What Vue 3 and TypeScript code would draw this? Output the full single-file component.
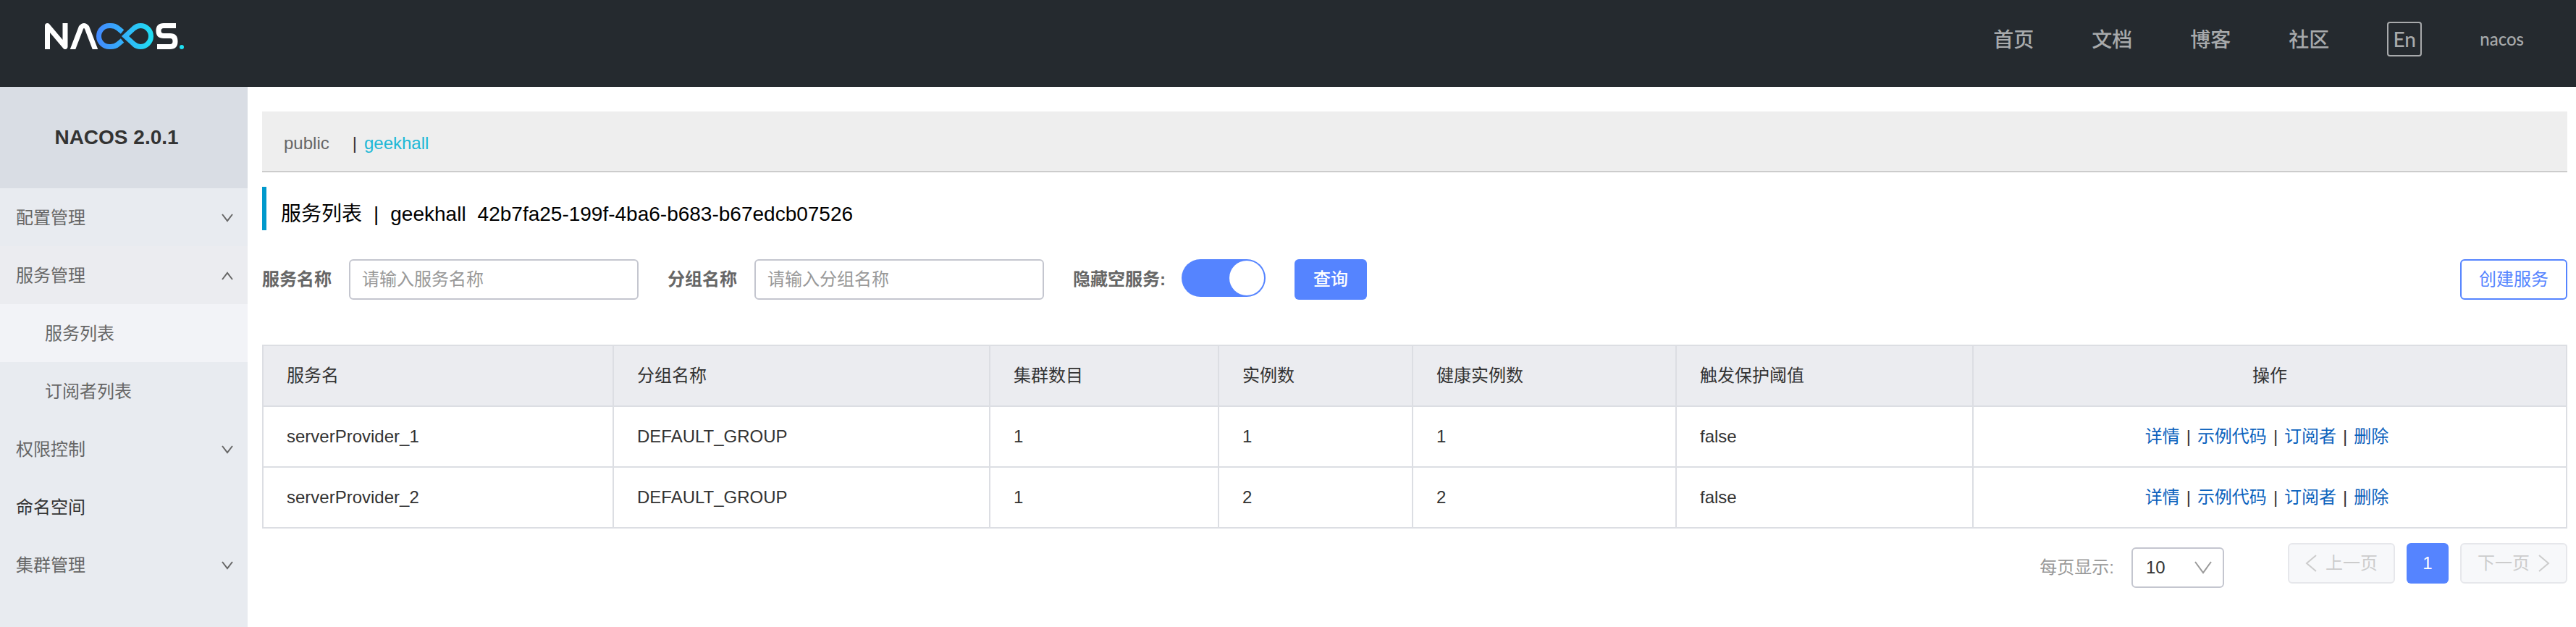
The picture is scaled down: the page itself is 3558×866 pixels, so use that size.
<script setup lang="ts">
import { ref } from 'vue'

interface MenuItem {
  label: string
  state: 'closed' | 'open' | 'plain'
  children?: { label: string; active: boolean }[]
}

const navLinks = ['首页', '文档', '博客', '社区']

const menu: MenuItem[] = [
  { label: '配置管理', state: 'closed' },
  {
    label: '服务管理',
    state: 'open',
    children: [
      { label: '服务列表', active: true },
      { label: '订阅者列表', active: false },
    ],
  },
  { label: '权限控制', state: 'closed' },
  { label: '命名空间', state: 'plain' },
  { label: '集群管理', state: 'closed' },
]

const columns = ['服务名', '分组名称', '集群数目', '实例数', '健康实例数', '触发保护阈值']

const services = [
  { name: 'serverProvider_1', group: 'DEFAULT_GROUP', clusters: 1, instances: 1, healthy: 1, threshold: 'false' },
  { name: 'serverProvider_2', group: 'DEFAULT_GROUP', clusters: 1, instances: 2, healthy: 2, threshold: 'false' },
]

const actions = ['详情', '示例代码', '订阅者', '删除']

const serviceName = ref('')
const groupName = ref('')
const hideEmpty = ref(true)
const pageSize = ref('10')
</script>

<template>
  <div class="page">
    <header class="topbar">
      <a class="logo" href="#" aria-label="Nacos">
        <svg viewBox="0 0 192 36" width="192" height="36" fill="none">
          <defs>
            <linearGradient id="loop" x1="72" y1="0" x2="151" y2="0" gradientUnits="userSpaceOnUse">
              <stop offset="0" stop-color="#4389ff" />
              <stop offset="1" stop-color="#1fe0f2" />
            </linearGradient>
          </defs>
          <path d="M3.5 36V3.5L28 32.500V0" stroke="#fff" stroke-width="7" stroke-linejoin="round" />
          <path d="M37 40L50 6Q54 1 58 6L71 40" stroke="#fff" stroke-width="7" stroke-linejoin="round" />
          <path
            d="M107 12L101 7Q97 3.500 91 3.500H89A14.500 14.500 0 0 0 89 32.500H91Q97 32.500 101 29L107 24M111 18L123 7Q127 3.500 132 3.500A14.500 14.500 0 0 1 132 32.500Q127 32.500 123 29Z"
            stroke="url(#loop)"
            stroke-width="7"
          />
          <path d="M181 3.500H164Q157 3.500 157 10.500T164 17.500H173Q180 17.500 180 25T173 32.500H155" stroke="#fff" stroke-width="7" />
          <circle cx="189" cy="33" r="3" fill="#1fe0f2" />
        </svg>
      </a>
      <nav class="nav">
        <a v-for="link in navLinks" :key="link" href="#">{{ link }}</a>
        <button class="lang" type="button">En</button>
        <a class="user" href="#">nacos</a>
      </nav>
    </header>

    <div class="body">
      <aside class="sidebar">
        <h1>NACOS 2.0.1</h1>
        <ul class="menu">
          <li v-for="item in menu" :key="item.label">
            <a class="item" :class="item.state" href="#">
              <span>{{ item.label }}</span>
              <svg v-if="item.state !== 'plain'" viewBox="0 0 16 12" width="16" height="12">
                <path :d="item.state === 'open' ? 'M1 11L8 2L15 11' : 'M1 1L8 10L15 1'" />
              </svg>
            </a>
            <ul v-if="item.children">
              <li v-for="child in item.children" :key="child.label">
                <a class="item child" :class="{ active: child.active }" href="#">{{ child.label }}</a>
              </li>
            </ul>
          </li>
        </ul>
      </aside>

      <main class="main">
        <div class="namespaces">
          <a href="#">public</a>
          <span class="bar">|</span>
          <a class="current" href="#">geekhall</a>
        </div>

        <h2 class="title">
          <span>服务列表</span><span>|</span><span>geekhall</span><span>42b7fa25-199f-4ba6-b683-b67edcb07526</span>
        </h2>

        <form class="filters" @submit.prevent>
          <div class="field">
            <label for="service-name">服务名称</label>
            <input id="service-name" v-model="serviceName" class="text" type="text" placeholder="请输入服务名称" />
          </div>
          <div class="field">
            <label for="group-name">分组名称</label>
            <input id="group-name" v-model="groupName" class="text" type="text" placeholder="请输入分组名称" />
          </div>
          <div class="field toggle">
            <label for="hide-empty">隐藏空服务:</label>
            <input id="hide-empty" v-model="hideEmpty" class="switch" type="checkbox" role="switch" />
          </div>
          <button class="btn primary" type="submit">查询</button>
          <button class="btn outline" type="button">创建服务</button>
        </form>

        <table class="services">
          <colgroup>
            <col class="c-name" />
            <col class="c-group" />
            <col class="c-clusters" />
            <col class="c-instances" />
            <col class="c-healthy" />
            <col class="c-threshold" />
            <col />
          </colgroup>
          <thead>
            <tr>
              <th v-for="column in columns" :key="column" scope="col">{{ column }}</th>
              <th class="center" scope="col">操作</th>
            </tr>
          </thead>
          <tbody>
            <tr v-for="service in services" :key="service.name">
              <td>{{ service.name }}</td>
              <td>{{ service.group }}</td>
              <td>{{ service.clusters }}</td>
              <td>{{ service.instances }}</td>
              <td>{{ service.healthy }}</td>
              <td>{{ service.threshold }}</td>
              <td class="center">
                <div class="actions">
                  <template v-for="(action, index) in actions" :key="action">
                    <span v-if="index">|</span>
                    <a href="#">{{ action }}</a>
                  </template>
                </div>
              </td>
            </tr>
          </tbody>
        </table>

        <div class="paging">
          <label for="page-size">每页显示:</label>
          <div class="select">
            <select id="page-size" v-model="pageSize">
              <option>10</option>
              <option>20</option>
              <option>30</option>
            </select>
            <svg viewBox="0 0 24 24" width="24" height="24"><path d="M1 4L12 19L23 4" /></svg>
          </div>
          <div class="pages">
            <button class="step" type="button" disabled>
              <svg viewBox="0 0 16 24" width="16" height="24"><path d="M15 1L2 12L15 23" /></svg>
              <span>上一页</span>
            </button>
            <button class="number" type="button">1</button>
            <button class="step" type="button" disabled>
              <span>下一页</span>
              <svg viewBox="0 0 16 24" width="16" height="24"><path d="M1 1L14 12L1 23" /></svg>
            </button>
          </div>
        </div>
      </main>
    </div>
  </div>
</template>

<style>
body {
  margin: 0;
  background: #fff;
}
</style>

<style scoped>
.page {
  display: flex;
  flex-direction: column;
  min-height: 100vh;
  font-family: 'Liberation Sans', 'Noto Sans CJK SC', sans-serif;
  font-size: 24px;
  line-height: 36px;
  color: #333;
}

.page *,
.page *::before {
  box-sizing: border-box;
}

a {
  color: inherit;
  text-decoration: none;
}

button,
input,
select {
  margin: 0;
  font: inherit;
}

svg {
  display: block;
  flex: none;
}

ul {
  margin: 0;
  padding: 0;
  list-style: none;
}

.topbar {
  display: flex;
  justify-content: space-between;
  align-items: flex-start;
  height: 120px;
  padding: 30px 72px 0 62px;
  background: #252a2f;
}

.logo {
  padding-top: 2px;
}

.nav {
  display: flex;
  align-items: center;
  gap: 80px;
  height: 48px;
  font-family: Lato, 'Noto Sans CJK SC', sans-serif;
  font-size: 28px;
  font-weight: 500;
  color: #a8aaac;
}

.lang {
  width: 48px;
  height: 48px;
  padding: 0;
  border: 2px solid #a8aaac;
  border-radius: 4px;
  background: none;
  color: inherit;
  line-height: 40px;
}

.user {
  font-size: 24px;
}

.body {
  display: flex;
  flex: 1;
}

.sidebar {
  flex: none;
  width: 342px;
  background: #e8ebf0;
  color: #666;
}

.sidebar h1 {
  margin: 0;
  padding-right: 20px;
  background: #d9dde4;
  color: #333;
  font-size: 28px;
  line-height: 140px;
  text-align: center;
}

.item {
  display: flex;
  align-items: center;
  justify-content: space-between;
  height: 80px;
  padding: 2px 20px 0 22px;
}

.item svg {
  fill: none;
  stroke: #666;
  stroke-width: 2;
}

.item.open {
  background: #ebecf0;
}

.item.plain {
  color: #333;
}

.item.child {
  padding-left: 62px;
}

.item.active {
  background: #f2f3f7;
}

.main {
  flex: 1;
  min-width: 0;
  padding: 34px 12px 0 20px;
}

.namespaces {
  display: flex;
  align-items: center;
  gap: 10px;
  height: 84px;
  padding: 6px 30px 0;
  border-bottom: 2px solid #ccc;
  background: #eee;
  color: #666;
}

.namespaces .bar {
  margin-left: 22px;
  color: #333;
}

.namespaces .current {
  color: #20b8d6;
}

.title {
  display: flex;
  gap: 16px;
  height: 60px;
  margin: 20px 0 40px;
  padding: 8px 0 0 20px;
  border-left: 6px solid #09c;
  color: #000;
  font-size: 28px;
  font-weight: 400;
  line-height: 60px;
}

.filters {
  display: flex;
  align-items: flex-start;
  gap: 40px;
  margin-bottom: 62px;
}

.field {
  display: flex;
  gap: 24px;
}

.field.toggle {
  gap: 22px;
}

.field label {
  color: #666;
  font-weight: 700;
  line-height: 56px;
}

.text {
  width: 400px;
  height: 56px;
  padding: 0 16px;
  border: 2px solid #c4c6cf;
  border-radius: 6px;
  background: #fff;
  color: #333;
}

.text::placeholder {
  color: #999;
  opacity: 1;
}

.switch {
  appearance: none;
  width: 116px;
  height: 52px;
  padding: 2px;
  border-radius: 26px;
  background: #c4c6cf;
}

.switch::before {
  content: '';
  display: block;
  width: 48px;
  height: 48px;
  border-radius: 50%;
  background: #fff;
}

.switch:checked {
  background: #5584ff;
}

.switch:checked::before {
  margin-left: auto;
}

.btn {
  height: 56px;
  border-radius: 6px;
}

.btn.primary {
  width: 100px;
  padding: 0;
  border: 0;
  background: #5584ff;
  color: #fff;
  font-weight: 500;
}

.btn.outline {
  width: 148px;
  margin-left: auto;
  padding: 0;
  border: 2px solid #5584ff;
  background: #fff;
  color: #5584ff;
}

.services {
  width: 100%;
  border-collapse: collapse;
  table-layout: fixed;
}

.services th,
.services td {
  height: 84px;
  padding: 0 32px;
  border: 2px solid #dcdee3;
  font-weight: 400;
  text-align: left;
}

.services th {
  background: #ebecf0;
}

.services .center {
  text-align: center;
}

.c-name {
  width: 484px;
}

.c-group {
  width: 520px;
}

.c-clusters {
  width: 316px;
}

.c-instances {
  width: 268px;
}

.c-healthy {
  width: 364px;
}

.c-threshold {
  width: 410px;
}

.actions {
  display: flex;
  justify-content: center;
  gap: 9px;
  padding-right: 8px;
}

.actions a {
  color: #0b62bd;
}

.paging {
  display: flex;
  justify-content: flex-end;
  margin-top: 20px;
}

.paging label {
  margin-top: 6px;
  color: #999;
  line-height: 56px;
}

.select {
  position: relative;
  width: 128px;
  height: 56px;
  margin: 6px 88px 0 24px;
}

.select select {
  appearance: none;
  width: 100%;
  height: 100%;
  padding: 0 18px;
  border: 2px solid #c4c6cf;
  border-radius: 6px;
  background: #fff;
  color: #333;
}

.select svg {
  position: absolute;
  top: 16px;
  right: 17px;
  pointer-events: none;
  fill: none;
  stroke: #999;
  stroke-width: 2;
}

.pages {
  display: flex;
  gap: 16px;
}

.pages button {
  display: flex;
  align-items: center;
  justify-content: center;
  gap: 12px;
  height: 56px;
  padding: 0;
  border-radius: 6px;
}

.step {
  width: 148px;
  border: 2px solid #e6e7eb;
  background: #f7f8fa;
  color: #ccc;
}

.step svg {
  fill: none;
  stroke: #ccc;
  stroke-width: 2;
}

.number {
  width: 58px;
  border: 0;
  background: #5584ff;
  color: #fff;
}
</style>
